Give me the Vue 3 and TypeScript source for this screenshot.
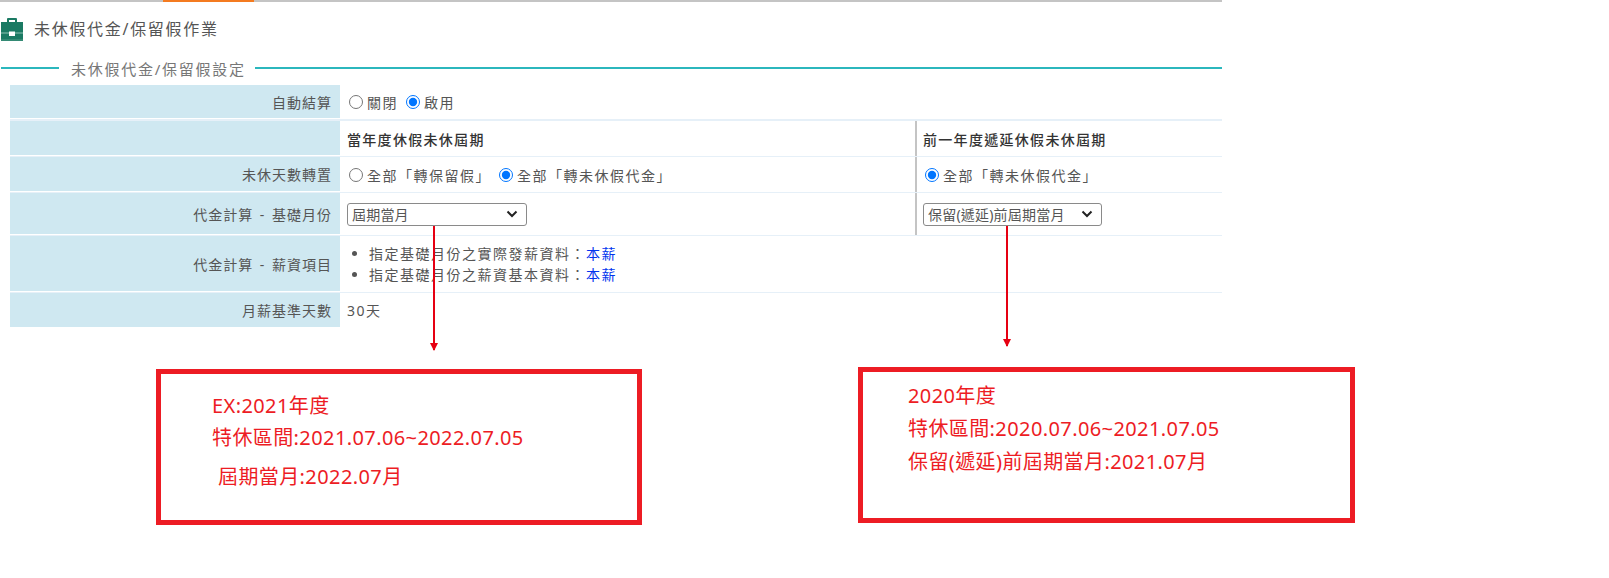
<script setup lang="ts">
interface Note { cls: string; lines: { text: string; cls?: string }[] }
const notes: Note[] = [
  { cls: 'box-a', lines: [{ text: 'EX:2021年度' }, { text: '特休區間:2021.07.06~2022.07.05' }, { text: '屆期當月:2022.07月', cls: 'shift' }] },
  { cls: 'box-b', lines: [{ text: '2020年度' }, { text: '特休區間:2020.07.06~2021.07.05' }, { text: '保留(遞延)前屆期當月:2021.07月' }] },
]
</script>

<template>
  <div class="page">
    <div class="tabbar"><span class="tab-active"></span></div>
    <header class="title">
      <svg class="icon" width="22" height="24" viewBox="0 0 22 24" aria-hidden="true">
        <path d="M6 5V2.2C6 1.5 6.5 1 7.2 1h7.6c.7 0 1.2.5 1.2 1.2V5h-2V3H8v2z" fill="#1b7a63"/>
        <rect x="0" y="5" width="22" height="19" fill="#1b7a63"/>
        <rect x="0" y="15.5" width="22" height="1" fill="#8fc2b4"/>
        <rect x="8" y="14.5" width="6" height="4.5" fill="#ffffff"/>
        <rect x="0" y="22.5" width="22" height="1" fill="#4f9a86"/>
      </svg>
      <span>未休假代金/保留假作業</span>
    </header>
    <div class="legend"><span class="rule short"></span><span class="legend-text">未休假代金/保留假設定</span><span class="rule"></span></div>

    <section class="form">
      <div class="row r1">
        <div class="label">自動結算</div>
        <div class="cell wide">
          <label class="radio"><input type="radio" name="auto" />關閉</label>
          <label class="radio"><input type="radio" name="auto" checked />啟用</label>
        </div>
      </div>
      <div class="row r2">
        <div class="label"></div>
        <div class="cell strong">當年度休假未休屆期</div>
        <div class="cell strong side">前一年度遞延休假未休屆期</div>
      </div>
      <div class="row r3">
        <div class="label">未休天數轉置</div>
        <div class="cell">
          <label class="radio"><input type="radio" name="cur" />全部「轉保留假」</label>
          <label class="radio"><input type="radio" name="cur" checked />全部「轉未休假代金」</label>
        </div>
        <div class="cell side">
          <label class="radio"><input type="radio" name="prev" checked />全部「轉未休假代金」</label>
        </div>
      </div>
      <div class="row r4">
        <div class="label">代金計算 - 基礎月份</div>
        <div class="cell"><select class="sel sel-a"><option>屆期當月</option></select></div>
        <div class="cell side"><select class="sel sel-b"><option>保留(遞延)前屆期當月</option></select></div>
      </div>
      <div class="row r5">
        <div class="label">代金計算 - 薪資項目</div>
        <div class="cell wide">
          <ul>
            <li>指定基礎月份之實際發薪資料：<span class="link">本薪</span></li>
            <li>指定基礎月份之薪資基本資料：<span class="link">本薪</span></li>
          </ul>
        </div>
      </div>
      <div class="row r6">
        <div class="label">月薪基準天數</div>
        <div class="cell wide">30天</div>
      </div>
    </section>

    <div class="arrow arrow-a"></div>
    <div class="arrow arrow-b"></div>

    <div v-for="n in notes" :key="n.cls" class="note" :class="n.cls">
      <p v-for="l in n.lines" :key="l.text" :class="l.cls">{{ l.text }}</p>
    </div>
  </div>
</template>

<style>
html, body { margin: 0; background: #fff; }
</style>

<style scoped>
.page {
  position: relative;
  width: 1609px;
  height: 578px;
  overflow: hidden;
  background: #fff;
  font-family: "Noto Sans", "Noto Sans CJK TC", sans-serif;
  font-size: 14px;
  color: #555;
}
.tabbar {
  width: 1222px;
  height: 2px;
  background: #c4c4c4;
  padding-left: 163px;
  box-sizing: border-box;
}
.tab-active { display: block; width: 91px; height: 2px; background: #f47b20; }
.title {
  display: flex;
  align-items: center;
  gap: 11px;
  height: 24px;
  margin-top: 14px;
  font-size: 16px;
  letter-spacing: 1.7px;
  color: #555;
}
.icon { flex: none; margin: 2px 0 0 1px; }
.legend {
  display: flex;
  align-items: center;
  width: 1222px;
  height: 22px;
  margin-top: 17px;
  padding-left: 1px;
  box-sizing: border-box;
  font-size: 15px;
  letter-spacing: 1.75px;
  color: #777;
}
.rule { flex: 1; height: 2px; background: #2bb7bd; }
.rule.short { flex: none; width: 58px; }
.legend-text { margin: 0 9px 0 12px; }
.form { width: 1212px; margin: 6px 0 0 10px; }
.row {
  display: grid;
  grid-template-columns: 330px 575px 307px;
  border-bottom: 1px solid #e6f0f8;
  box-sizing: border-box;
}
.r1 { height: 36px; border-bottom-width: 2px; }
.r2 { height: 36px; }
.r3 { height: 36px; }
.r4 { height: 43px; }
.r5 { height: 57px; }
.r6 { height: 34px; border-bottom: none; }
.r1 .label, .r2 .label, .r3 .label, .r4 .label, .r5 .label { margin-bottom: 1px; }
.label {
  display: flex;
  align-items: center;
  justify-content: flex-end;
  padding-right: 8px;
  background: #cfe8f1;
  letter-spacing: 1px;
  color: #555;
  word-spacing: 2px;
}
.cell {
  display: flex;
  align-items: center;
  gap: 6px;
  padding-left: 7px;
  letter-spacing: 1.5px;
  color: #555;
}
.wide { grid-column: 2 / 4; }
.strong { color: #333; font-weight: 500; letter-spacing: 1.3px; }
.side { border-left: 2px solid #c4c4c4; padding-left: 6px; }
.radio { display: inline-flex; align-items: center; gap: 4px; }
.radio input { width: 14px; height: 14px; margin: 0 0 0 2px; accent-color: #0075ff; }
.sel {
  appearance: none;
  height: 23px;
  box-sizing: border-box;
  border: 1px solid #8a8a8a;
  border-radius: 3px;
  font: inherit;
  font-size: 14px;
  letter-spacing: 0.2px;
  color: #555;
  padding: 0 0 0 4px;
  background: #fff url("data:image/svg+xml,%3Csvg xmlns='http://www.w3.org/2000/svg' width='12' height='8' viewBox='0 0 12 8'%3E%3Cpath d='M1.5 1.5 6 6l4.5-4.5' fill='none' stroke='%23222' stroke-width='2'/%3E%3C/svg%3E") no-repeat right 8px center;
}
.sel-a { width: 180px; }
.sel-b { width: 179px; }
ul { margin: 0; padding: 0 0 0 22px; line-height: 21px; }
.link { color: #0033ee; }
.arrow { position: absolute; width: 2px; background: #e60012; }
.arrow::after {
  content: "";
  position: absolute;
  left: -3px;
  bottom: -1px;
  border-left: 4px solid transparent;
  border-right: 4px solid transparent;
  border-top: 8px solid #e60012;
}
.arrow-a { left: 433px; top: 226px; height: 124px; }
.arrow-b { left: 1006px; top: 226px; height: 120px; }
.note {
  position: absolute;
  box-sizing: border-box;
  border: 5px solid #ed1c24;
  color: #ed1c24;
  font-size: 20px;
  letter-spacing: 0.4px;
}
.note p { margin: 0; white-space: nowrap; line-height: 26px; }
.box-a { left: 156px; top: 369px; width: 486px; height: 156px; padding: 19px 0 0 51px; }
.box-a p + p { margin-top: 6px; }
.box-a .shift { margin-top: 13px; padding-left: 6px; }
.box-b { left: 858px; top: 367px; width: 497px; height: 156px; padding: 11px 0 0 45px; }
.box-b p + p { margin-top: 7px; }
</style>
